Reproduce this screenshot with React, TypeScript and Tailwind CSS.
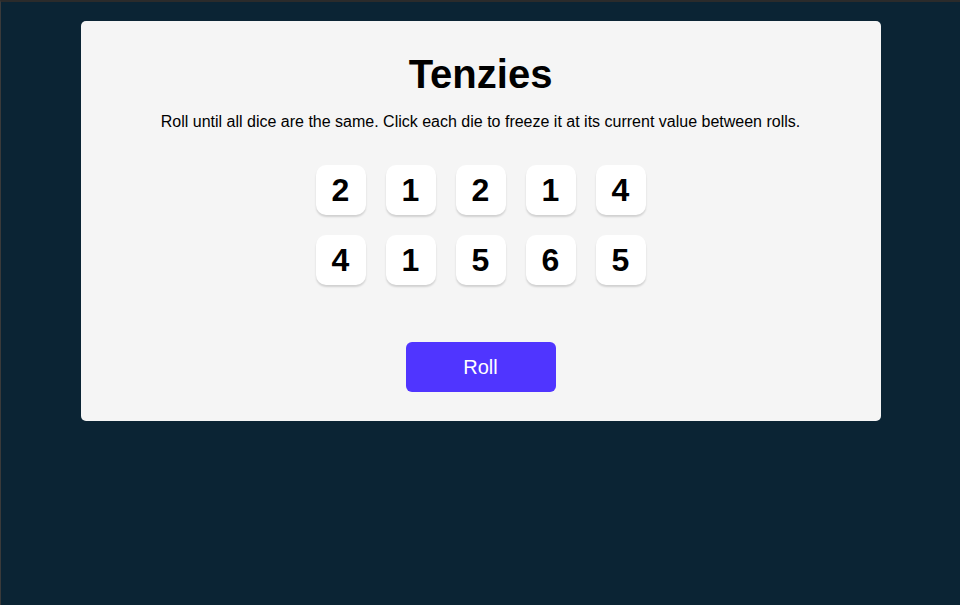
import React from "react";

const dice = [2, 1, 2, 1, 4, 4, 1, 5, 6, 5];

export default function App() {
  return (
    <div
      className="w-[960px] h-[605px] bg-[#0b2434] border-t-2 border-t-[#2b2b2b] border-l border-l-[#3a3a3a] flex justify-center overflow-hidden"
      style={{ fontFamily: '"Liberation Sans", Arial, sans-serif' }}
    >
      <main className="mt-[19px] w-[800px] h-[400px] bg-[#f5f5f5] rounded-[5px] flex flex-col items-center pt-[30px]">
        <h1 className="text-[40px] leading-[46px] font-bold text-black">Tenzies</h1>
        <p className="mt-[16px] text-[16px] leading-[18px] text-black">
          Roll until all dice are the same. Click each die to freeze it at its current value between rolls.
        </p>
        <div className="mt-[34px] grid grid-cols-5 gap-[20px]">
          {dice.map((d, i) => (
            <button
              key={i}
              className="w-[50px] h-[50px] bg-white rounded-[10px] shadow-[0_2px_2px_rgba(0,0,0,0.15)] flex items-center justify-center text-[32px] font-bold text-black"
            >
              {d}
            </button>
          ))}
        </div>
        <button className="mt-[57px] w-[150px] h-[50px] bg-[#5035ff] rounded-[6px] text-white text-[20px]">
          Roll
        </button>
      </main>
    </div>
  );
}
